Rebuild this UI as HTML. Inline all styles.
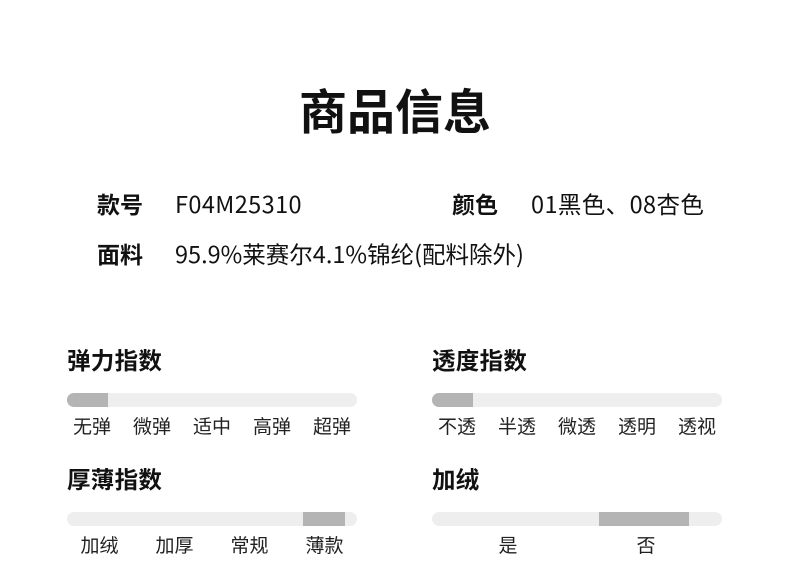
<!DOCTYPE html>
<html><head><meta charset="utf-8"><style>
*{margin:0;padding:0;box-sizing:border-box}
body{width:790px;height:562px;background:#fff;position:relative;overflow:hidden;font-family:"Noto Sans CJK SC","Liberation Sans",sans-serif;color:#111}
.a{position:absolute;white-space:nowrap;line-height:1}
.t{left:0;width:790px;text-align:center;top:84px;font-size:48px;font-weight:700}
.l{font-size:23px;font-weight:700}
.v{font-size:23.5px;letter-spacing:0.4px}
.h{font-size:23.5px;font-weight:700;letter-spacing:0.3px}
.track{position:absolute;height:14px;width:290px;background:#eeeeee;border-radius:7px;overflow:hidden}
.fill{position:absolute;top:0;height:14px;background:#b4b4b4}
.lab{position:absolute;display:flex;width:300px;font-size:19px;color:#222;line-height:1}
.lab span{flex:1;text-align:center}
</style></head><body>
<div class="a t">商品信息</div>
<div class="a l" style="left:97px;top:192px">款号</div>
<div class="a v" style="left:175px;top:192px">F04M25310</div>
<div class="a l" style="left:452px;top:192px">颜色</div>
<div class="a v" style="left:531px;top:192px">01黑色、08杏色</div>
<div class="a l" style="left:97px;top:242px">面料</div>
<div class="a v" style="left:175px;top:242px;letter-spacing:0">95.9%莱赛尔4.1%锦纶(配料除外)</div>

<div class="a h" style="left:67px;top:348px">弹力指数</div>
<div class="track" style="left:67px;top:393px"><div class="fill" style="left:0;width:41px"></div></div>
<div class="lab" style="left:62px;top:416px"><span>无弹</span><span>微弹</span><span>适中</span><span>高弹</span><span>超弹</span></div>

<div class="a h" style="left:432px;top:348px">透度指数</div>
<div class="track" style="left:432px;top:393px"><div class="fill" style="left:0;width:41px"></div></div>
<div class="lab" style="left:427px;top:416px"><span>不透</span><span>半透</span><span>微透</span><span>透明</span><span>透视</span></div>

<div class="a h" style="left:67px;top:467px">厚薄指数</div>
<div class="track" style="left:67px;top:512px"><div class="fill" style="left:236px;width:42px"></div></div>
<div class="lab" style="left:62px;top:535px;width:300px"><span>加绒</span><span>加厚</span><span>常规</span><span>薄款</span></div>

<div class="a h" style="left:432px;top:467px">加绒</div>
<div class="track" style="left:432px;top:512px"><div class="fill" style="left:167px;width:90px"></div></div>
<div class="lab" style="left:439px;top:535px;width:276px"><span>是</span><span>否</span></div>
</body></html>
